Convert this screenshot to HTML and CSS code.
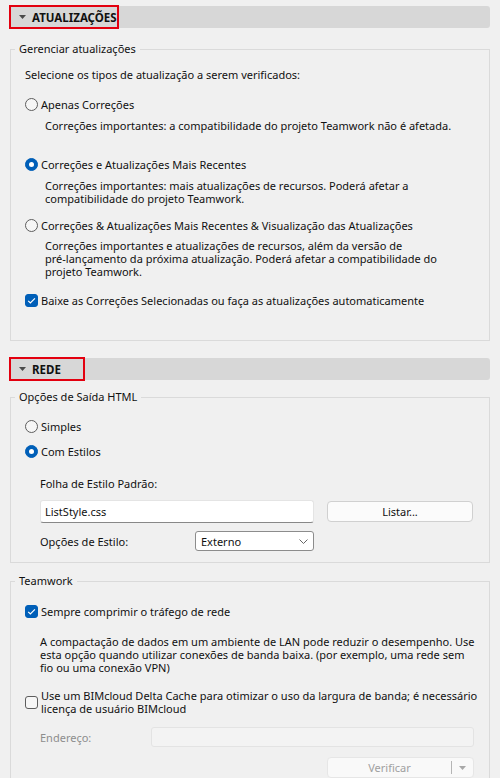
FILE: index.html
```html
<!DOCTYPE html>
<html lang="pt-BR">
<head>
<meta charset="utf-8">
<title>Preferências</title>
<link rel="stylesheet" href="styles.css">
</head>
<body>
<div class="page">
  <section class="sect">
    <div class="bar"><span class="bar-title mark-a"><svg class="tri" width="7" height="4" viewBox="0 0 7 4"><path d="M0 0h7L3.5 4z"/></svg>ATUALIZAÇÕES</span></div>
    <fieldset class="group g-upd">
      <legend>Gerenciar atualizações</legend>
      <div class="gbody col">
        <p class="line intro">Selecione os tipos de atualização a serem verificados:</p>
        <div class="opt r1"><span class="radio"></span><span>Apenas Correções</span></div>
        <p class="desc d1">Correções importantes: a compatibilidade do projeto Teamwork não é afetada.</p>
        <div class="opt r2"><span class="radio on"></span><span>Correções e Atualizações Mais Recentes</span></div>
        <p class="desc d2">Correções importantes: mais atualizações de recursos. Poderá afetar a<br>compatibilidade do projeto Teamwork.</p>
        <div class="opt r3"><span class="radio"></span><span>Correções &amp; Atualizações Mais Recentes &amp; Visualização das Atualizações</span></div>
        <p class="desc d3">Correções importantes e atualizações de recursos, além da versão de<br>pré-lançamento da próxima atualização. Poderá afetar a compatibilidade do<br>projeto Teamwork.</p>
        <div class="opt c1"><span class="check on"><svg width="13" height="13" viewBox="0 0 13 13"><path d="M3.2 6.8l2.2 2.2L9.9 4.4"/></svg></span><span>Baixe as Correções Selecionadas ou faça as atualizações automaticamente</span></div>
      </div>
    </fieldset>
  </section>

  <section class="sect sect-2">
    <div class="bar"><span class="bar-title mark-b"><svg class="tri" width="7" height="4" viewBox="0 0 7 4"><path d="M0 0h7L3.5 4z"/></svg>REDE</span></div>
    <fieldset class="group g-html">
      <legend>Opções de Saída HTML</legend>
      <div class="gbody col">
        <div class="opt s1"><span class="radio"></span><span>Simples</span></div>
        <div class="opt s2"><span class="radio on"></span><span>Com Estilos</span></div>
        <p class="line indent s3">Folha de Estilo Padrão:</p>
        <div class="row indent s4">
          <div class="textbox">ListStyle.css</div>
          <div class="btn">Listar...</div>
        </div>
        <div class="row indent s5">
          <span class="field-label">Opções de Estilo:</span>
          <div class="select"><span>Externo</span><svg width="9" height="5" viewBox="0 0 9 5"><path d="M0.5 0.5l4 4 4-4"/></svg></div>
        </div>
      </div>
    </fieldset>

    <fieldset class="group g-team">
      <legend>Teamwork</legend>
      <div class="gbody col">
        <div class="opt t1"><span class="check on"><svg width="13" height="13" viewBox="0 0 13 13"><path d="M3.2 6.8l2.2 2.2L9.9 4.4"/></svg></span><span>Sempre comprimir o tráfego de rede</span></div>
        <p class="desc-b t2">A compactação de dados em um ambiente de LAN pode reduzir o desempenho. Use<br>esta opção quando utilizar conexões de banda baixa. (por exemplo, uma rede sem<br>fio ou uma conexão VPN)</p>
        <div class="opt opt-multi t3"><span class="check"></span><span>Use um BIMcloud Delta Cache para otimizar o uso da largura de banda; é necessário<br>licença de usuário BIMcloud</span></div>
        <div class="row indent t4">
          <span class="field-label dis addr-label">Endereço:</span>
          <div class="textbox dis-box"></div>
        </div>
        <div class="row t5">
          <div class="split">
            <span class="split-main">Verificar</span>
            <span class="split-sep"></span>
            <span class="split-arrow"><svg width="7" height="4" viewBox="0 0 7 4"><path d="M0 0h7L3.5 4z"/></svg></span>
          </div>
        </div>
      </div>
    </fieldset>
  </section>
</div>
</body>
</html>
```

FILE: styles.css
```css
* { box-sizing: border-box; }
html, body { margin: 0; padding: 0; }
body {
  background: #f0f0f0;
  font-family: "Noto Sans", "Open Sans", sans-serif;
  font-size: 11px;
  line-height: 13px;
  color: #111;
  width: 500px;
  height: 778px;
  overflow: hidden;
}
p { margin: 0; }

.page { padding: 6px 10px 0 10px; }

.bar {
  height: 22px;
  background: #d7d7d7;
  border-radius: 0 3px 3px 0;
  display: flex;
  align-items: center;
}
.bar-title {
  height: 24px;
  margin-left: -1px;
  display: flex;
  align-items: center;
  gap: 6px;
  padding-left: 8px;
  font-weight: 700;
  font-size: 11.5px;
  color: #111;
  border: 2px solid #e3000f;
}
.mark-a { width: 110px; }
.mark-b { width: 76px; }
.tri { fill: #4a4a4a; flex: none; }

.group {
  margin: 13px 0 0 0;
  padding: 0;
  border: 1px solid #dadada;
  min-width: 0;
}
.group legend {
  margin-left: 4px;
  padding: 0 4px;
  line-height: 16px;
  font-size: 11px;
}
.gbody { padding-left: 14px; }
.col { display: flex; flex-direction: column; align-items: flex-start; }

.line { white-space: nowrap; }
.opt {
  display: flex;
  align-items: center;
  gap: 3px;
  white-space: nowrap;
  min-height: 13px;
}
.desc { padding-left: 20px; white-space: nowrap; }
.desc-b { padding-left: 15px; white-space: nowrap; }
.indent { margin-left: 15px; }

.radio {
  width: 13px;
  height: 13px;
  border-radius: 50%;
  border: 1px solid #5d5d5d;
  background: #f6f6f6;
  flex: none;
  display: flex;
  align-items: center;
  justify-content: center;
}
.radio.on { background: #005fb8; border-color: #005fb8; }
.radio.on::after {
  content: "";
  width: 5px;
  height: 5px;
  border-radius: 50%;
  background: #fff;
}
.check {
  width: 13px;
  height: 13px;
  border-radius: 3px;
  border: 1px solid #5d5d5d;
  background: #f6f6f6;
  flex: none;
  display: flex;
}
.check.on { background: #005fb8; border-color: #005fb8; }
.check svg { margin: -1px; }
.check path { fill: none; stroke: #fff; stroke-width: 1.2; }

/* section 1 vertical rhythm */
.g-upd .gbody { padding-top: 11px; padding-bottom: 33px; }
.r1 { margin-top: 17px; }
.d1 { margin-top: 8px; }
.r2 { margin-top: 26px; }
.d2 { margin-top: 8px; }
.r3 { margin-top: 14px; }
.d3 { margin-top: 7px; }
.c1 { margin-top: 16px; }

/* section 2 */
.sect-2 { margin-top: 17px; }
.g-html { margin-top: 9px; }
.g-html .gbody { padding-top: 15px; padding-bottom: 11px; }
.s2 { margin-top: 12px; }
.s3 { margin-top: 19px; }
.s4 { margin-top: 10px; }
.s5 { margin-top: 8px; }

.row { display: flex; align-items: center; }
.textbox {
  width: 274px;
  height: 23px;
  background: #fff;
  border: 1px solid #e4e4e4;
  border-bottom-color: #888;
  border-radius: 3px;
  padding-left: 4px;
  display: flex;
  align-items: center;
  white-space: nowrap;
}
.btn {
  margin-left: 13px;
  width: 146px;
  height: 21px;
  background: #fbfbfb;
  border: 1px solid #d0d0d0;
  border-radius: 4px;
  display: flex;
  align-items: center;
  justify-content: center;
}
.field-label { width: 155px; white-space: nowrap; }
.select {
  width: 119px;
  height: 20px;
  background: #fff;
  border: 1px solid #8c8c8c;
  border-radius: 3px;
  display: flex;
  align-items: center;
  justify-content: space-between;
  padding: 0 5px 0 5px;
}
.select path { fill: none; stroke: #666; stroke-width: 1; }

/* section 3 */
.g-team { margin-top: 10px; }
.g-team .gbody { padding-top: 16px; padding-bottom: 20px; }
.t2 { margin-top: 17px; }
.t3 { margin-top: 15px; }
.t4 { margin-top: 12px; }
.t5 { margin-top: 10px; align-self: stretch; justify-content: flex-end; padding-right: 15px; }
.opt-multi span:last-child { line-height: 13px; }

.dis { color: #8d8d8d; }
.addr-label { width: 111px; }
.dis-box {
  width: 323px;
  height: 20px;
  background: #f3f3f3;
  border: 1px solid #e3e3e3;
  border-radius: 3px;
}
.split {
  width: 147px;
  height: 21px;
  background: #f9f9f9;
  border: 1px solid #e6e6e6;
  border-radius: 4px;
  display: flex;
  align-items: center;
  color: #a0a0a0;
}
.split-main { flex: 1; text-align: center; }
.split-sep { width: 1px; height: 13px; background: #b5b5b5; }
.split-arrow { width: 21px; display: flex; justify-content: center; }
.split-arrow svg { fill: #a8a8a8; }
```
